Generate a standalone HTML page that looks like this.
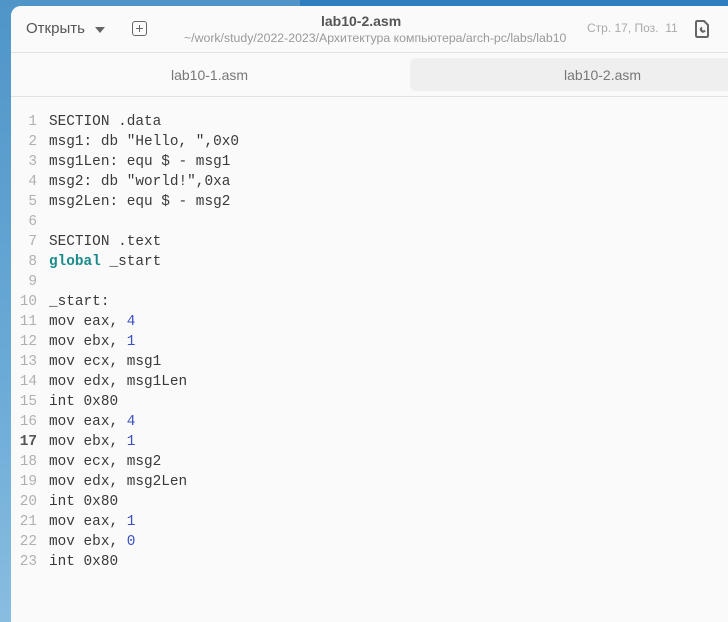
<!DOCTYPE html>
<html><head><meta charset="utf-8"><style>
html,body{margin:0;width:728px;height:622px;overflow:hidden}
body{background:linear-gradient(180deg,#4f95c8,#6aaad6 60%,#89bde0);font-family:"Liberation Sans","DejaVu Sans",sans-serif;position:relative}
.topbar{position:absolute;left:300px;top:0;width:428px;height:6px;background:#2f7fc0}
.win{position:absolute;left:11px;top:6px;width:717px;height:616px;background:#fafafa;border-radius:10px 0 0 0;overflow:hidden}
.hdr{position:absolute;left:0;top:0;right:0;height:46px;border-bottom:1px solid #e2e2e2;background:#fafafa}
.open{position:absolute;left:15px;top:14px;font-size:15px;color:#555}
.tri{position:absolute;left:84px;top:21px;width:0;height:0;border-left:5px solid transparent;border-right:5px solid transparent;border-top:6px solid #666}
.plus{position:absolute;left:121px;top:15px;width:13px;height:13px;border:1.5px solid #666;border-radius:3px}
.plus:before{content:"";position:absolute;left:3px;top:5.5px;width:7px;height:1.6px;background:#666}
.plus:after{content:"";position:absolute;left:5.7px;top:3px;width:1.6px;height:7px;background:#666}
.title{position:absolute;left:310px;top:7px;font-size:14px;color:#555;font-weight:bold}
.path{position:absolute;left:173px;top:25px;font-size:12.3px;color:#999;white-space:nowrap}
.pos{position:absolute;left:576px;top:15px;font-size:12px;color:#aaa}
.tabs{position:absolute;left:0;top:47px;right:0;height:43px;border-bottom:1px solid #e2e2e2}
.t1{position:absolute;left:160px;top:14px;font-size:14px;color:#777}
.t2{position:absolute;left:399px;top:5px;width:330px;height:33px;background:#efefef;border-radius:6px}
.t2 span{position:absolute;left:154px;top:9px;font-size:14px;color:#777}
.code{position:absolute;left:0;top:106px;font-family:"Liberation Mono","DejaVu Sans Mono",monospace;font-size:14.4px;line-height:20px;color:#3a3a3a;white-space:pre}
.ln{display:inline-block;width:26px;text-align:right;color:#b0b0b0;margin-right:12px}
.b{color:#3b4fc4}.k{color:#1c8a8a;font-weight:bold}
</style></head><body>
<div class="topbar"></div>
<div class="win">
<div class="hdr">
<div class="open">Открыть</div><div class="tri"></div>
<div class="plus"></div>
<div class="title">lab10-2.asm</div>
<div class="path">~/work/study/2022-2023/Архитектура компьютера/arch-pc/labs/lab10</div>
<div class="pos">Стр. 17, Поз.&nbsp; 11</div>
<svg style="position:absolute;left:683px;top:14px" width="16" height="18" viewBox="0 0 16 18"><path d="M2 2.5 Q2 1 3.5 1 H10 L14 5 V15.5 Q14 17 12.5 17 H3.5 Q2 17 2 15.5Z" fill="none" stroke="#666" stroke-width="2"/><path d="M6 8.5 L9.5 12.5 M8 7.5 a2.2 2.2 0 1 0 3 3" fill="none" stroke="#666" stroke-width="2"/></svg>
</div>
<div class="tabs"><div class="t1">lab10-1.asm</div><div class="t2"><span>lab10-2.asm</span></div></div>
<div class="code"><span class="ln">1</span>SECTION .data
<span class="ln">2</span>msg1: db "Hello, ",0x0
<span class="ln">3</span>msg1Len: equ $ - msg1
<span class="ln">4</span>msg2: db "world!",0xa
<span class="ln">5</span>msg2Len: equ $ - msg2
<span class="ln">6</span>
<span class="ln">7</span>SECTION .text
<span class="ln">8</span><span class="k">global</span> _start
<span class="ln">9</span>
<span class="ln">10</span>_start:
<span class="ln">11</span>mov eax, <span class="b">4</span>
<span class="ln">12</span>mov ebx, <span class="b">1</span>
<span class="ln">13</span>mov ecx, msg1
<span class="ln">14</span>mov edx, msg1Len
<span class="ln">15</span>int 0x80
<span class="ln">16</span>mov eax, <span class="b">4</span>
<span class="ln" style="color:#555;font-weight:bold">17</span>mov ebx, <span class="b">1</span>
<span class="ln">18</span>mov ecx, msg2
<span class="ln">19</span>mov edx, msg2Len
<span class="ln">20</span>int 0x80
<span class="ln">21</span>mov eax, <span class="b">1</span>
<span class="ln">22</span>mov ebx, <span class="b">0</span>
<span class="ln">23</span>int 0x80</div>
</div>
</body></html>
